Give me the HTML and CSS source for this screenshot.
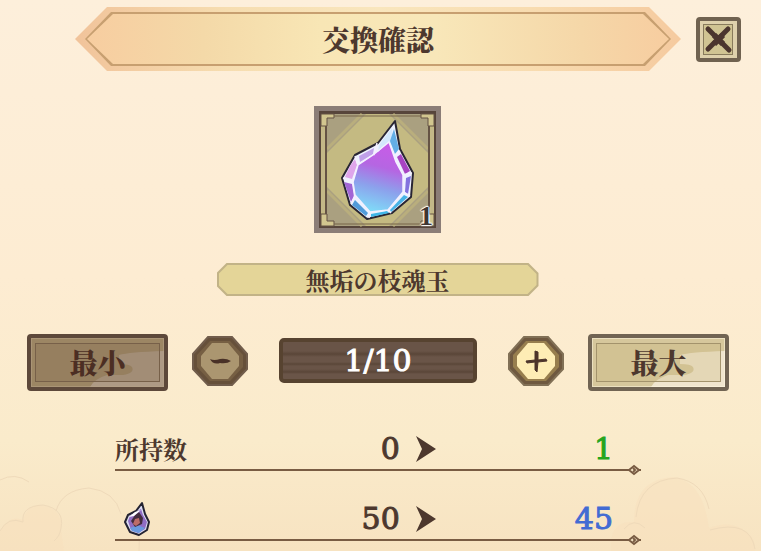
FILE: index.html
```html
<!DOCTYPE html>
<html lang="ja">
<head>
    <meta charset="UTF-8">
    <meta name="viewport" content="width=device-width, initial-scale=1.0">
    <title>交換確認</title>
    <link rel="stylesheet" href="styles.css">
</head>
<body>
    <!-- 背景の雲 -->
    <svg class="cloud cloud-left" viewBox="0 0 150 90" aria-hidden="true">
        <path class="cloud-fill" d="M0 70Q10 53 23 59Q27 42 44 45Q63 48 61 69L64 90H0Z"/>
        <path d="M0 70Q8 55 23 61Q21 45 43 44Q65 48 61 67Q60 75 54 80M56 50Q62 29 89 27Q115 30 121 53M139 90Q142 68 125 59M0 19Q15 11 29 21"/>
    </svg>
    <svg class="cloud cloud-right" viewBox="0 0 150 90" aria-hidden="true">
        <path class="cloud-fill" d="M0 90Q-2 59 23 61Q23 18 62 16Q92 20 98 67Q121 58 137 72Q145 79 144 90Z"/>
        <path d="M13 68Q23 56 34 67M25 56Q29 19 66 17Q92 21 98 48M99 69Q139 58 144 88"/>
    </svg>

    <main class="dialog">
        <header class="header">
            <div class="banner">
                <div class="banner-line">
                    <h1 class="banner-title">交換確認</h1>
                </div>
            </div>
            <button class="close" aria-label="閉じる">
                <svg viewBox="0 0 45 45">
                    <rect x="2" y="2" width="41" height="41" rx="2" fill="#ded1ac" stroke="#706250" stroke-width="4"/>
                    <rect x="7.500" y="7.500" width="29" height="30" fill="#d0c493" stroke="#887b5c"/>
                    <path d="M12 12L33 33M32 12L12 32" fill="none" stroke="#4b352e" stroke-width="5" stroke-linecap="round"/>
                    <path d="M18 18L27 27M27 18L18 27" stroke="#4b352e" stroke-width="6"/>
                </svg>
            </button>
        </header>

        <div class="item">
            <svg class="item-art" viewBox="0 0 127 127" aria-hidden="true">
                <defs>
                    <linearGradient id="core" x1="0.600" y1="0" x2="0.400" y2="1">
                        <stop offset="0" stop-color="#c95be8"/>
                        <stop offset="0.350" stop-color="#b566e2"/>
                        <stop offset="0.650" stop-color="#8ca1ec"/>
                        <stop offset="1" stop-color="#7fdcf8"/>
                    </linearGradient>
                </defs>
                <rect width="127" height="127" fill="#8b7d77"/>
                <rect x="5" y="5" width="117" height="117" fill="#57453b"/>
                <rect x="7" y="8" width="113" height="112" fill="#c4ba82"/>
                <path d="M13 8H52L13 47ZM75 8H114V47ZM13 81L52 120H13ZM114 81V120H75Z" fill="#aaa080"/>
                <path d="M13 43L48 8M79 8L114 43M13 85L48 120M79 120L114 85" stroke="#b9ae7d" stroke-width="3"/>
                <path d="M7 20V8H20V12H13V20ZM107 8H120V20H114V12H107ZM7 108H13V115H20V120H7ZM114 108H120V120H107V115H114Z" fill="#d2c68f" stroke="#655344"/>
                <path d="M12 20V108M115 20V108" stroke="#655344" stroke-width="2"/>
                <path d="M9 22V106M118 22V106" stroke="#c3b788" stroke-width="3"/>
                <path d="M20 10H107M20 118H107" stroke="#766449" stroke-width="1"/>
                <!-- 魂玉 -->
                <path d="M81 15L86 43L99 67L97 91L78 107L53 113L36 99L28 72L41 49L64 37Z" fill="#eef2ff" stroke="#292634" stroke-width="2" stroke-linejoin="round"/>
                <path d="M75 36L82 56L89 69L89 86L74 104L56 106L41 89L39 76L44 59L59 49Z" fill="url(#core)"/>
                <path d="M78 22L80 43L75 35L64 46L65 39Z" fill="#d3e8fc"/>
                <path d="M80 23L85 43L81 48L76 35Z" fill="#63aee5"/>
                <path d="M83 51L87 48L96 65L91 68Z" fill="#a845c2"/>
                <path d="M92 72L97 70L94 88L91 86Z" fill="#8372de"/>
                <path d="M76 104L90 89L94 91L77 106Z" fill="#48b3e6"/>
                <path d="M57 108L73 105L75 107L57 111Z" fill="#40b6e8"/>
                <path d="M41 94L54 107L52 110L38 99Z" fill="#519bda"/>
                <path d="M30 76L38 78L40 91L37 96Z" fill="#a266d5"/>
                <path d="M36 60L41 53L43 59L38 73L31 71Z" fill="#dfa5eb"/>
                <path d="M45 50L60 42L59 48L46 56Z" fill="#c0a0e9"/>
                <path d="M29 72L39 76L44 59L59 49L75 36L82 56L89 69L89 86L74 104L56 106L41 89L39 76M41 50L44 59M63 37L60 49M81 49L86 45M89 69L98 67M89 86L96 90M74 104L77 107M56 106L55 112M41 89L37 98" fill="none" stroke="#f4f0ff" stroke-width="1.500" stroke-linejoin="round"/>
            </svg>
            <span class="item-count">1</span>
        </div>

        <div class="name-plate">
            <h2 class="name">無垢の枝魂玉</h2>
        </div>

        <div class="controls">
            <button class="limit limit-min" disabled>
                <svg class="gloss" viewBox="0 0 133 49" aria-hidden="true">
                    <path d="M59 49Q63 41 76 37H92Q104 35 101 29Q99 26 88 26V17Q98 14 133 13V49Z"/>
                </svg>
                <span class="limit-text">最小</span>
            </button>
            <div class="stepper">
                <button class="step" aria-label="減らす" disabled>
                    <svg viewBox="0 0 56 50">
                        <path d="M16 1H40L55 18V33L40 49H16L1 33V18Z" fill="#66503a" stroke="#715d4c" stroke-width="2"/>
                        <path d="M18 5H38L51 19V31L38 45H18L5 31V19Z" fill="#765f43"/>
                        <path d="M20 7H36L47 20V30L36 43H20L9 30V20Z" fill="#ab9670"/>
                        <path d="M18 23Q22 25 28 23Q34 22 39 25Q35 28 28 27Q21 29 18 23Z" fill="#493127"/>
                    </svg>
                </button>
                <output class="amount">1/10</output>
                <button class="step" aria-label="増やす">
                    <svg viewBox="0 0 56 50">
                        <path d="M16 1H40L55 18V33L40 49H16L1 33V18Z" fill="#6f5940" stroke="#817056" stroke-width="2"/>
                        <path d="M18 5H38L51 19V31L38 45H18L5 31V19Z" fill="#977e4e"/>
                        <path d="M20 7H36L47 20V30L36 43H20L9 30V20Z" fill="#feedb5"/>
                        <path d="M27 15L30 16V24L38 23L39 25L30 26L29 36L27 34V26L19 27L18 25L27 24Z" fill="#4d352b" stroke="#4d352b" stroke-linejoin="round"/>
                    </svg>
                </button>
            </div>
            <button class="limit">
                <svg class="gloss" viewBox="0 0 133 49" aria-hidden="true">
                    <path d="M59 49Q63 41 76 37H92Q104 35 101 29Q99 26 88 26V17Q98 14 133 13V49Z"/>
                </svg>
                <span class="limit-text">最大</span>
            </button>
        </div>

        <ul class="stats">
            <li class="stat">
                <span class="stat-label">所持数</span>
                <span class="before">0</span>
                <svg class="arrow" viewBox="0 0 20 26" aria-hidden="true"><path d="M0 0L20 13L0 26L6 13Z"/></svg>
                <span class="after gain">1</span>
                <svg class="line-end" viewBox="0 0 14 12" aria-hidden="true"><path d="M2 6L7 2L12 6L7 10Z"/><path d="M6 4L8 6L6 8"/></svg>
            </li>
            <li class="stat">
                <span class="stat-label">
                    <svg class="stat-icon" viewBox="0 0 28 36" role="img" aria-label="魂玉">
                        <path d="M19 2L22 13L26 21L24 29L16 34L7 31L2 21L5 14L13 10Z" fill="#dcdcf3" stroke="#242332" stroke-width="2" stroke-linejoin="round"/>
                        <path d="M18 8L20 14L24 21L22 28L15 32L8 29L5 20L7 15Z" fill="#906dc4"/>
                        <path d="M7 27L14 24L22 27L16 32L9 30Z" fill="#6a99df"/>
                        <path d="M16 11L20 17L19 23L12 26L8 20L12 14Z" fill="#432c3e"/>
                        <path d="M12 18L16 17L17 22L13 25L10 23Z" fill="#bd6c69"/>
                        <path d="M6 16L12 11L18 9L11 15Z" fill="#fff"/>
                    </svg>
                </span>
                <span class="before">50</span>
                <svg class="arrow" viewBox="0 0 20 26" aria-hidden="true"><path d="M0 0L20 13L0 26L6 13Z"/></svg>
                <span class="after cost">45</span>
                <svg class="line-end" viewBox="0 0 14 12" aria-hidden="true"><path d="M2 6L7 2L12 6L7 10Z"/><path d="M6 4L8 6L6 8"/></svg>
            </li>
        </ul>
    </main>
</body>
</html>
```
FILE: styles.css
```css
* {
    box-sizing: border-box;
}

body {
    margin: 0;
    min-height: 100vh;
    position: relative;
    overflow-x: hidden;
    background: linear-gradient(#fdefdb, #fdecd2 50%, #faebcb 80%, #f7e3c1);
    color: #4d382e;
    font-family: "Noto Serif CJK JP", "Noto Sans CJK JP", sans-serif;
    font-weight: bold;
}

button {
    padding: 0;
    border: 0;
    background: none;
    color: inherit;
    font: inherit;
}

svg {
    display: block;
}

.cloud {
    position: absolute;
    bottom: 0;
    width: 150px;
    height: 90px;
    fill: none;
    stroke: #efdaba;
}

.cloud-fill {
    fill: #f8debb;
    stroke: none;
    opacity: 0.4;
}

.cloud-left {
    left: 0;
}

.cloud-right {
    right: 0;
}

.dialog {
    position: relative;
    display: flex;
    flex-direction: column;
    align-items: center;
}

/* タイトル */
.header {
    align-self: stretch;
    display: flex;
    align-items: center;
    gap: 15px;
    padding: 7px 20px 0 75px;
}

.banner {
    flex: 1;
    padding: 5px 10px;
    background: linear-gradient(90deg, #f1c39a, #f6ddb0 25%, #f9e6bd 50%, #f8dcb0 75%, #f5ca9f);
    clip-path: polygon(0 50%, 32px 0, calc(100% - 32px) 0, 100% 50%, calc(100% - 32px) 100%, 32px 100%);
}

.banner-line {
    padding: 2px;
    background: #c79f70;
    clip-path: polygon(0 50%, 26px 0, calc(100% - 26px) 0, 100% 50%, calc(100% - 26px) 100%, 26px 100%);
}

.banner-title {
    margin: 0;
    background: linear-gradient(90deg, #f7cda0, #f4d9a8 20%, #f8e6b5 40%, #f8e7b9 60%, #f5d7a8 85%, #f7cda0);
    clip-path: polygon(0 50%, 26px 0, calc(100% - 26px) 0, 100% 50%, calc(100% - 26px) 100%, 26px 100%);
    font-size: 28px;
    font-weight: 900;
    line-height: 50px;
    text-align: center;
}

.close {
    width: 45px;
}

/* アイテム */
.item {
    position: relative;
    width: 127px;
    margin-top: 35px;
    margin-right: 6px;
}

.item-count {
    position: absolute;
    right: 8px;
    bottom: 4px;
    font-family: "Liberation Serif", serif;
    font-size: 28px;
    line-height: 26px;
    color: #3f3532;
    text-shadow: 1px 0 1px #fff, -1px 0 1px #fff, 0 1px 1px #fff, 0 -1px 1px #fff, 0 0 2px #fff;
}

.name-plate {
    width: 322px;
    margin-top: 30px;
    margin-right: 6px;
    padding: 2px;
    background: #c2b387;
    clip-path: polygon(0 10px, 10px 0, calc(100% - 10px) 0, 100% 10px, 100% calc(100% - 10px), calc(100% - 10px) 100%, 10px 100%, 0 calc(100% - 10px));
}

.name {
    margin: 0;
    background: #e4d598;
    clip-path: polygon(0 9px, 9px 0, calc(100% - 9px) 0, 100% 9px, 100% calc(100% - 9px), calc(100% - 9px) 100%, 9px 100%, 0 calc(100% - 9px));
    font-size: 24px;
    line-height: 29px;
    text-align: center;
}

/* 数量の操作 */
.controls {
    align-self: stretch;
    display: flex;
    gap: 24px;
    margin-top: 38px;
    padding: 0 32px 0 27px;
}

.limit {
    position: relative;
    width: 141px;
    height: 57px;
    padding: 4px;
    border: 4px solid #716453;
    border-radius: 4px;
    background: #d6c79c;
    font-size: 28px;
    font-weight: 900;
    line-height: 37px;
}

.gloss {
    position: absolute;
    inset: 0;
    width: 100%;
    height: 100%;
    fill: #fbf3e4;
    opacity: 0.7;
}

.limit-text {
    position: relative;
    display: block;
    border: 1px solid #a3936c;
    background: rgba(201, 183, 127, 0.3);
    color: #4d382e;
}

.limit::after {
    content: "";
    position: absolute;
    inset: 0;
    border: 1px solid rgba(255, 249, 226, 0.5);
}

.limit-min {
    border-color: #5d483a;
    background: #9c8664;
}

.limit-min .gloss {
    fill: #b6a394;
}

.limit-min .limit-text {
    border-color: #776049;
    background: rgba(137, 113, 85, 0.3);
    color: #4c2e23;
}

.limit-min::after {
    border-color: rgba(184, 163, 136, 0.5);
}

.stepper {
    flex: 1;
    display: flex;
    align-items: center;
    gap: 31px;
    padding-bottom: 4px;
}

.step {
    flex: none;
    width: 56px;
}

.amount,
.before,
.after {
    font-family: "DejaVu Serif", serif;
    font-size: 30px;
    font-weight: normal;
    -webkit-text-stroke: 1px currentColor;
}

.amount {
    flex: 1;
    border: 4px solid #574330;
    border-radius: 5px;
    background: linear-gradient(#695447 0 9px, #5a4638 12px, #6a5548 15px 20px, #5a4638 22px, #695447 24px 27px, #5a4638 30px, #6a5548 32px);
    color: #fff;
    line-height: 37px;
    text-align: center;
}

/* 所持数の変化 */
.stats {
    align-self: stretch;
    margin: 38px 120px 0 115px;
    padding: 0;
    list-style: none;
}

.stat {
    position: relative;
    display: grid;
    grid-template-columns: 5fr 5fr 20px 6fr;
    column-gap: 16px;
    align-items: center;
    height: 42px;
    padding-right: 28px;
    border-bottom: 2px solid #795c43;
}

.stat + .stat {
    margin-top: 28px;
}

.stat-label {
    font-size: 24px;
    line-height: 36px;
    white-space: nowrap;
}

.stat-icon {
    width: 28px;
    height: 36px;
    margin-left: 8px;
}

.before,
.after {
    line-height: 36px;
    text-align: right;
}

.gain {
    color: #25a51d;
}

.cost {
    color: #426bd3;
}

.arrow {
    width: 20px;
    fill: #4d382e;
}

.line-end {
    position: absolute;
    right: 0;
    bottom: -7px;
    width: 14px;
    fill: #faebcb;
    stroke: #795c43;
    stroke-width: 2;
}
```
